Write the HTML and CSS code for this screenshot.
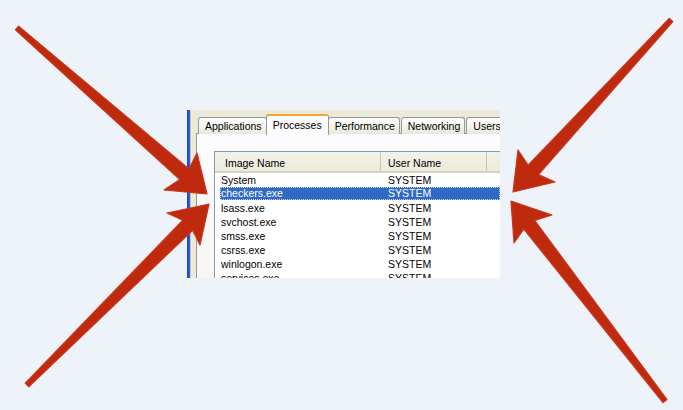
FILE: index.html
```html
<!DOCTYPE html>
<html>
<head>
<meta charset="utf-8">
<link rel="stylesheet" href="styles.css">
</head>
<body>
<div class="page">
  <div class="shot">
    <div class="edge"></div>
    <div class="edge-line"></div>
    <div class="win">
      <div class="tabs">
        <div class="tab">Applications</div>
        <div class="tab active">Processes</div>
        <div class="tab">Performance</div>
        <div class="tab">Networking</div>
        <div class="tab">Users</div>
      </div>
      <div class="panel">
        <div class="list">
          <div class="header">
            <div class="hcol c1">Image Name</div>
            <div class="hcol c2">User Name</div>
            <div class="hcol c3"></div>
          </div>
          <div class="row"><span class="name">System</span><span class="user">SYSTEM</span></div>
          <div class="row sel"><span class="name">checkers.exe</span><span class="user">SYSTEM</span></div>
          <div class="row"><span class="name">lsass.exe</span><span class="user">SYSTEM</span></div>
          <div class="row"><span class="name">svchost.exe</span><span class="user">SYSTEM</span></div>
          <div class="row"><span class="name">smss.exe</span><span class="user">SYSTEM</span></div>
          <div class="row"><span class="name">csrss.exe</span><span class="user">SYSTEM</span></div>
          <div class="row"><span class="name">winlogon.exe</span><span class="user">SYSTEM</span></div>
          <div class="row"><span class="name">services.exe</span><span class="user">SYSTEM</span></div>
        </div>
      </div>
    </div>
  </div>
  <svg class="arrows" viewBox="0 0 683 410" width="683" height="410">
    <g class="arrow">
      <polygon points="15.4,29.9 179.8,179.5 164,190 207,194 197,153 189,168.9 18.6,26.1"/>
      <polygon points="28.8,386.8 192.6,230.2 200,245 209,204 167,213 182.8,220.2 25.2,383.2"/>
      <polygon points="669.2,18.3 528.1,165.2 518,150 513,192 555,182 538.5,174.6 672.8,21.7"/>
      <polygon points="667,399.5 534.8,220.5 552,215 511,201 514,243 523.8,229.1 663,402.5"/>
    </g>
  </svg>
</div>
</body>
</html>
```

FILE: styles.css
```css
html, body {
  margin: 0;
  padding: 0;
  background: #eef2f9;
}

.page {
  position: relative;
  width: 683px;
  height: 410px;
  padding: 110px 0 0 187px;
  box-sizing: border-box;
  font-family: "Liberation Sans", Arial, sans-serif;
}

.shot {
  display: flex;
  width: 313px;
  height: 168px;
  overflow: hidden;
}

.edge {
  width: 3px;
  background: linear-gradient(to right, #1a47c0, #2a62dc);
  flex: none;
}

.edge-line {
  width: 1px;
  background: #c9c6b8;
  flex: none;
}

.win {
  flex: 1;
  background: #ece9d8;
  padding: 3px 0 0 5px;
  display: flex;
  flex-direction: column;
  min-width: 0;
}

.tabs {
  display: flex;
  align-items: flex-end;
  height: 21px;
  padding-left: 2px;
  position: relative;
  z-index: 1;
  margin-bottom: -1px;
}

.tab {
  flex: none;
  height: 16px;
  line-height: 16px;
  padding: 0 4px 0 6px;
  margin-right: 1px;
  font-size: 10.5px;
  color: #000;
  border: 1px solid #919b9c;
  border-bottom: none;
  border-radius: 3px 3px 0 0;
  background: linear-gradient(#ffffff, #f3f2ec 60%, #e9e7dd);
  white-space: nowrap;
}

.tab.active {
  height: 19px;
  line-height: 19px;
  padding: 0 6px 0 6px;
  margin: 0 -1px 0 -2px;
  border-top: 2px solid #f3a531;
  background: #fcfcfe;
  position: relative;
  top: 1px;
  z-index: 1;
}

.panel {
  flex: 1;
  border: 1px solid #919b9c;
  border-right: none;
  background: linear-gradient(#fcfcfe, #f4f3ee);
  padding: 17px 0 0 17px;
}

.list {
  background: #fff;
  border: 1px solid #7f9db9;
  border-right: none;
  height: 200px;
  font-size: 10.5px;
  color: #000;
}

.header {
  display: flex;
  height: 21px;
  background: linear-gradient(#f3f2ea, #ebeadb);
  border-bottom: 2px solid #d6d2c2;
  box-sizing: border-box;
}

.hcol {
  flex: none;
  line-height: 22px;
  box-sizing: border-box;
  border-right: 1px solid #c7c5b2;
  white-space: nowrap;
}

.hcol.c1 { width: 166px; padding-left: 10px; }
.hcol.c2 { width: 106px; padding-left: 7px; }
.hcol.c3 { width: 60px; border-right: none; }

.row {
  display: flex;
  height: 14px;
  line-height: 14px;
  margin-left: 5px;
  padding-left: 1px;
  white-space: nowrap;
}

.row .name { width: 167px; flex: none; }
.row .user { flex: none; }

.row.sel {
  background: #316ac5;
  color: #fff;
  height: 13px;
  line-height: 13px;
  margin-bottom: 1px;
  outline: 1px dotted #c9d6ee;
  outline-offset: -1px;
}

.arrows {
  position: absolute;
  left: 0;
  top: 0;
  pointer-events: none;
}

.arrow polygon {
  fill: #bf2a0e;
  stroke: #c8361a;
  stroke-width: 1.2;
  stroke-linejoin: round;
}
```
